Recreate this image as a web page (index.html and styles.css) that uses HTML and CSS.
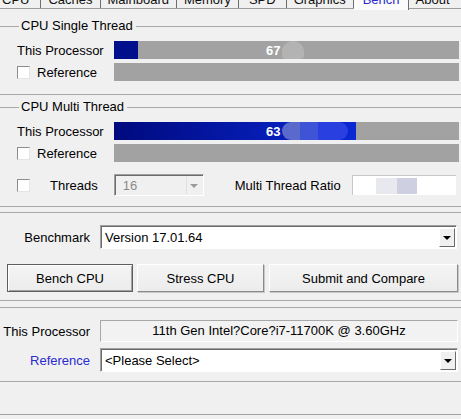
FILE: index.html
```html
<!DOCTYPE html>
<html lang="en">
<head>
  <meta charset="UTF-8" />
  <title>CPU-Z Bench</title>
  <link rel="stylesheet" href="styles.css">
</head>
<body>

  <div class="tabs">
    <span class="tab tab-first">CPU</span>
    <span class="tab">Caches</span>
    <span class="tab">Mainboard</span>
    <span class="tab">Memory</span>
    <span class="tab tab-spd">SPD</span>
    <span class="tab">Graphics</span>
    <span class="tab active">Bench</span>
    <span class="tab tab-last">About</span>
  </div>

  <fieldset class="group g-single">
    <legend>CPU Single Thread</legend>
    <div class="row first">
      <span class="lbl">This Processor</span>
      <div class="bar">
        <div class="fill" style="width:24px"></div>
        <span class="val">67<i class="blur blur-gray"></i></span>
      </div>
    </div>
    <div class="row">
      <span class="lbl"><span class="check"></span>Reference</span>
      <div class="bar"></div>
    </div>
  </fieldset>

  <fieldset class="group g-multi">
    <legend>CPU Multi Thread</legend>
    <div class="row first">
      <span class="lbl">This Processor</span>
      <div class="bar">
        <div class="fill" style="width:242px"></div>
        <span class="val">63<i class="blur blur-blue"></i></span>
      </div>
    </div>
    <div class="row">
      <span class="lbl"><span class="check"></span>Reference</span>
      <div class="bar"></div>
    </div>
    <div class="row threads">
      <span class="check"></span>
      <span class="threads-lbl">Threads</span>
      <div class="combo disabled combo-threads">
        <span class="combo-text">16</span>
        <span class="combo-btn"><b class="arrow"></b></span>
      </div>
      <span class="ratio-lbl">Multi Thread Ratio</span>
      <div class="ratio"><i class="r1"></i><i class="r2"></i></div>
    </div>
  </fieldset>

  <fieldset class="group g-bench">
    <div class="row form-row bench-row">
      <span class="flbl">Benchmark</span>
      <div class="combo">
        <span class="combo-text">Version 17.01.64</span>
        <span class="combo-btn"><b class="arrow"></b></span>
      </div>
    </div>
    <div class="buttons">
      <button class="btn btn-default">Bench CPU</button>
      <button class="btn btn-stress">Stress CPU</button>
      <button class="btn btn-submit">Submit and Compare</button>
    </div>
  </fieldset>

  <fieldset class="group g-compare">
    <div class="row form-row proc-row">
      <span class="flbl">This Processor</span>
      <div class="textbox">11th Gen Intel?Core?i7-11700K @ 3.60GHz</div>
    </div>
    <div class="row form-row ref-row">
      <span class="flbl link">Reference</span>
      <div class="combo">
        <span class="combo-text">&lt;Please Select&gt;</span>
        <span class="combo-btn"><b class="arrow"></b></span>
      </div>
    </div>
  </fieldset>

  <div class="bottom"></div>

</body>
</html>
```

FILE: styles.css
```css
* { box-sizing: border-box; }
body {
  margin: 0;
  background: #f0f0f0;
  font-family: "Liberation Sans", Arial, sans-serif;
  font-size: 13px;
  color: #000;
  width: 461px;
  overflow: hidden;
}

/* ===== TABS ===== */
.tabs {
  display: flex;
  height: 17px;
  margin-top: -8px;
  border-bottom: 1px solid #9c9c9c;
  white-space: nowrap;
}
.tab {
  line-height: 16px;
  padding: 0 7px;
  border-right: 1px solid #6e6e6e;
  color: #111;
}
.tab-first { margin-left: -4px; padding-left: 6px; padding-right: 11px; }
.tab-spd { padding: 0 10px; }
.tab-last { border-right: none; }
.tab.active {
  color: #2b2bd0;
  background: #fbfbfb;
  height: 18px;
  padding: 0 8px 0 9px;
}

/* ===== GROUPS ===== */
.group {
  margin: 0;
  padding: 0 2px 0 17px;
  border: 1px solid #a8a8a8;
  border-left: none;
  border-right: none;
  min-width: 0;
}
.group legend {
  line-height: 16px;
  padding: 0 3px 0 2px;
  margin-left: 2px;
}
.g-single { margin-top: 9px; padding-bottom: 13px; }
.g-multi { margin-top: 4px; padding-bottom: 10px; }
.g-bench { margin-top: 5px; padding: 0 3px 8px 7px; }
.g-compare { margin-top: 6px; padding: 0 3px 9px 0; }

.row {
  display: flex;
  align-items: center;
  height: 18px;
  margin-top: 4px;
}
.g-single .row.first { margin-top: 7px; }
.g-multi .row.first { margin-top: 7px; }

.lbl {
  display: flex;
  align-items: center;
  width: 97px;
  flex: none;
}

/* ===== BARS ===== */
.bar {
  flex: 1;
  height: 18px;
  background: #a2a2a2;
  display: grid;
}
.bar > * { grid-area: 1 / 1; }
.fill {
  justify-self: start;
  height: 18px;
  background: linear-gradient(to right, #000a7e, #0a28d4);
}
.g-single .fill { background: #00108c; }
.val {
  display: flex;
  align-items: center;
  padding-left: 152px;
  color: #fff;
  font-weight: bold;
}
.blur {
  display: inline-block;
  border-radius: 9px;
  margin-left: 2px;
}
.blur-gray {
  width: 22px;
  height: 18px;
  background: #b3b3b3;
  border-radius: 11px 11px 4px 4px;
}
.blur-blue {
  width: 66px;
  height: 18px;
  background: linear-gradient(to right, #5a6acc 0, #5a6acc 28%, #3f53d6 28%, #3f53d6 55%, #2a3fe0 55%);
}

/* ===== CHECKBOX ===== */
.check {
  display: inline-block;
  width: 13px;
  height: 13px;
  background: #fff;
  border: 1px solid;
  border-color: #8c8c8c #e4e4e4 #e4e4e4 #8c8c8c;
  margin-right: 7px;
  flex: none;
}

/* ===== THREADS ROW ===== */
.row.threads {
  height: 22px;
  margin-top: 12px;
}
.threads-lbl { margin-left: 13px; }
.combo {
  display: flex;
  align-items: center;
  height: 24px;
  flex: 1;
  background: #fff;
  border: 1px solid;
  border-color: #a0a0a0 #fff #fff #a0a0a0;
  box-shadow: inset 1px 1px 0 #6b6b6b;
  padding: 2px 1px 1px 4px;
}
.combo-text { flex: 1; }
.combo-btn {
  width: 16px;
  height: 19px;
  display: flex;
  align-items: center;
  justify-content: center;
  background: #f0f0f0;
  border: 1px solid;
  border-color: #fff #6b6b6b #6b6b6b #fff;
}
.arrow {
  width: 0;
  height: 0;
  border-left: 4px solid transparent;
  border-right: 4px solid transparent;
  border-top: 4px solid #000;
}
.combo-threads {
  flex: none;
  width: 90px;
  height: 22px;
  margin-left: 16px;
  background: #f0f0f0;
  color: #8a8a8a;
  padding-left: 8px;
}
.combo-threads .combo-btn {
  border: none;
  border-left: 1px solid #e0e0e0;
  height: 17px;
}
.combo-threads .arrow { border-top-color: #9a9a9a; }
.ratio-lbl { margin-left: 31px; }
.ratio {
  width: 104px;
  height: 20px;
  margin-left: 11px;
  background: #fff;
  border-left: 1px solid #c8c8c8;
  border-top: 1px solid #c8c8c8;
  display: flex;
  align-items: center;
  padding-left: 23px;
}
.ratio i { display: block; height: 16px; }
.r1 { width: 21px; background: #e8e8ef; }
.r2 { width: 20px; background: #cfcfe2; }

/* ===== FORM ROWS ===== */
.form-row { height: 24px; }
.flbl {
  width: 90px;
  text-align: right;
  flex: none;
  margin-right: 10px;
}
.g-bench .flbl { width: 83px; }
.bench-row { margin-top: 12px; padding-right: 1px; }
.link { color: #2b2bd0; }
.proc-row { margin-top: 12px; height: 22px; }
.ref-row { margin-top: 6px; }
.textbox {
  flex: 1;
  height: 22px;
  line-height: 20px;
  text-align: center;
  background: #f2f2f2;
  border: 1px solid;
  border-color: #a8a8a8 #fff #fff #a8a8a8;
}

/* ===== BUTTONS ===== */
.buttons {
  display: flex;
  gap: 4px;
  margin-top: 15px;
}
.btn {
  height: 28px;
  font: inherit;
  color: #000;
  background: linear-gradient(#f4f4f4, #ececec);
  border: 1px solid;
  border-color: #fff #8a8a8a #8a8a8a #fff;
  box-shadow: 1px 1px 0 #c8c8c8;
  padding: 0;
}
.btn-default {
  width: 126px;
  border: 1px solid #5e5e5e;
  box-shadow: inset 1px 1px 0 #fff, inset -1px -1px 0 #a0a0a0;
}
.btn-stress { width: 127px; }
.btn-submit { flex: 1; margin-left: 1px; }

/* ===== BOTTOM ===== */
.bottom {
  height: 33px;
  border-bottom: 1px solid #a0a0a0;
  background: #f0f0f0;
}
```
